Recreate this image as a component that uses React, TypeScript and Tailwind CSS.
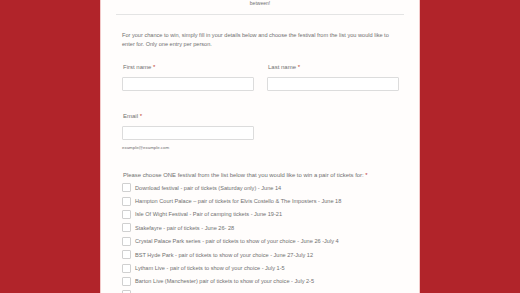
const festivals = [
  "Download festival - pair of tickets (Saturday only) - June 14",
  "Hampton Court Palace – pair of tickets for Elvis Costello & The Imposters - June 18",
  "Isle Of Wight Festival - Pair of camping tickets - June 19-21",
  "Stakefayre - pair of tickets - June 26- 28",
  "Crystal Palace Park series - pair of tickets to show of your choice - June 26 -July 4",
  "BST Hyde Park - pair of tickets to show of your choice - June 27-July 12",
  "Lytham Live - pair of tickets to show of your choice - July 1-5",
  "Barton Live (Manchester) pair of tickets to show of your choice - July 2-5",
  "Roundhay - Pair of tickets for any show of your choice - July 3-4",
];

function Field({ label }: { label: string }) {
  return (
    <div className="flex flex-col">
      <span className="h-[8px] text-[6px] leading-[8px] pl-[1px]">
        {label} <span className="text-[#c0392b]">*</span>
      </span>
      <div className="mt-[6px] h-[14px] w-[132px] rounded-[1px] border border-[#dcdcdc] bg-white" />
    </div>
  );
}

export default function App() {
  return (
    <div
      className="flex h-[293px] w-[520px] justify-center overflow-hidden bg-[#b1242a]"
      style={{ fontFamily: '"Liberation Sans", Arial, sans-serif' }}
    >
      <div className="h-full w-[320px] border-x border-[#f2c9c9] bg-[#fffdfc] text-[#707070]">
        <div className="text-center text-[5px] leading-[7px]">between!</div>
        <div className="mx-[15px] mt-[7px] h-px bg-[#e4e4e4]" />

        <div className="px-[21px]">
          <p className="mt-[16px] text-[5.6px] leading-[9px]">
            For your chance to win, simply fill in your details below and choose the festival from the list you would like to enter for. Only one entry per person.
          </p>

          <div className="mt-[14px] flex gap-[13px]">
            <Field label="First name" />
            <Field label="Last name" />
          </div>

          <div className="mt-[21px]">
            <Field label="Email" />
            <div className="mt-[5px] text-[4.4px] leading-[6px]">example@example.com</div>
          </div>

          <div className="mt-[20px] pl-[1px] text-[5.9px] leading-[8px]">
            Please choose ONE festival from the list below that you would like to win a pair of tickets for: <span className="text-[#c0392b]">*</span>
          </div>

          <div className="mt-[2px] flex flex-col">
            {festivals.map((f) => (
              <div key={f} className="flex h-[13.4px] items-center">
                <div className="h-[9px] w-[9px] shrink-0 rounded-[1px] border border-[#d0d0d0] bg-white" />
                <span className="ml-[4px] whitespace-nowrap text-[5.6px] leading-[8px]">{f}</span>
              </div>
            ))}
          </div>
        </div>
      </div>
    </div>
  );
}
